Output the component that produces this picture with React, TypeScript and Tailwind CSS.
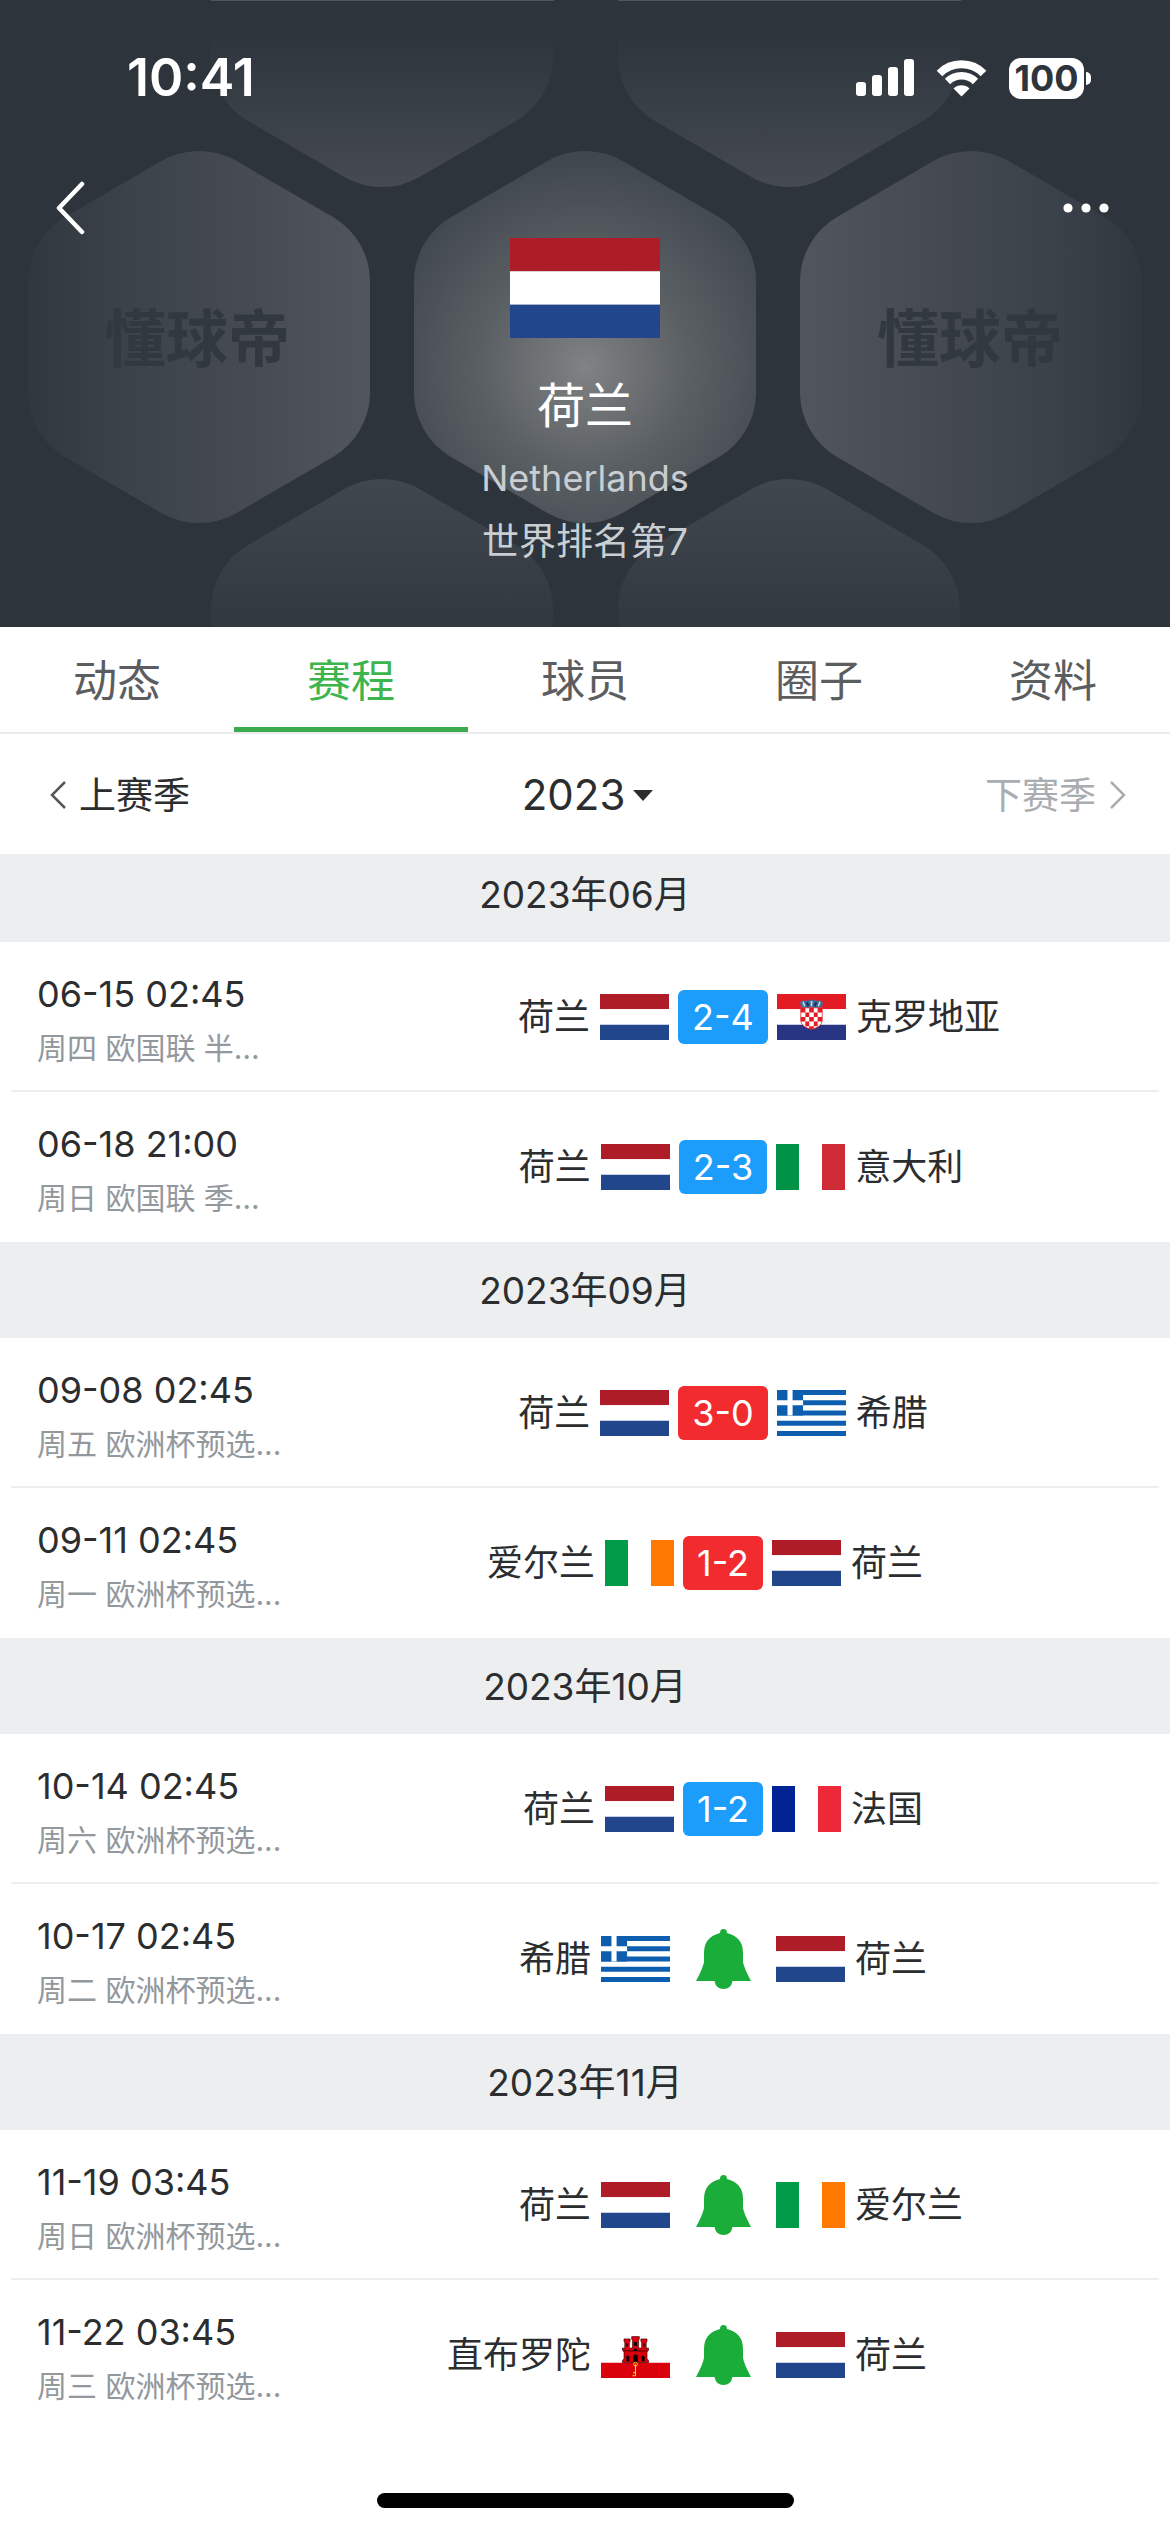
import React from "react";

type FlagCode = "nl" | "hr" | "it" | "gr" | "ie" | "fr" | "gi";

type Team = { name: string; flag: FlagCode };

type Match = {
  time: string;
  info: string;
  home: Team;
  away: Team;
  score?: string;
  result?: "win" | "loss";
};

type Month = { title: string; matches: Match[] };

const NL: Team = { name: "荷兰", flag: "nl" };
const GR: Team = { name: "希腊", flag: "gr" };
const IE: Team = { name: "爱尔兰", flag: "ie" };

const months: Month[] = [
  {
    title: "2023年06月",
    matches: [
      { time: "06-15 02:45", info: "周四 欧国联 半…", home: NL, away: { name: "克罗地亚", flag: "hr" }, score: "2-4", result: "loss" },
      { time: "06-18 21:00", info: "周日 欧国联 季…", home: NL, away: { name: "意大利", flag: "it" }, score: "2-3", result: "loss" },
    ],
  },
  {
    title: "2023年09月",
    matches: [
      { time: "09-08 02:45", info: "周五 欧洲杯预选...", home: NL, away: GR, score: "3-0", result: "win" },
      { time: "09-11 02:45", info: "周一 欧洲杯预选...", home: IE, away: NL, score: "1-2", result: "win" },
    ],
  },
  {
    title: "2023年10月",
    matches: [
      { time: "10-14 02:45", info: "周六 欧洲杯预选...", home: NL, away: { name: "法国", flag: "fr" }, score: "1-2", result: "loss" },
      { time: "10-17 02:45", info: "周二 欧洲杯预选...", home: GR, away: NL },
    ],
  },
  {
    title: "2023年11月",
    matches: [
      { time: "11-19 03:45", info: "周日 欧洲杯预选...", home: NL, away: IE },
      { time: "11-22 03:45", info: "周三 欧洲杯预选...", home: { name: "直布罗陀", flag: "gi" }, away: NL },
    ],
  },
];

const tabs = ["动态", "赛程", "球员", "圈子", "资料"];

const HEX =
  "M-37.5-176A75 75 0 0 1 37.5-176L133.5-120.3A75 75 0 0 1 171-55.7V55.7A75 75 0 0 1 133.5 120.3L37.5 176A75 75 0 0 1-37.5 176L-133.5 120.3A75 75 0 0 1-171 55.7V-55.7A75 75 0 0 1-133.5-120.3Z";

/* Hexagon pattern behind the team header */
const HeaderBackdrop = () => (
  <svg
    className="absolute inset-0 h-full w-full"
    viewBox="0 0 1170 627"
    preserveAspectRatio="xMidYMid slice"
    aria-hidden="true"
  >
    <defs>
      <linearGradient id="hexLeft">
        <stop offset="0" stopColor="#30373f" />
        <stop offset="0.25" stopColor="#3a4148" />
        <stop offset="0.6" stopColor="#444a50" />
        <stop offset="1" stopColor="#51565d" />
      </linearGradient>
      <linearGradient id="hexRight">
        <stop offset="0" stopColor="#51565d" />
        <stop offset="0.4" stopColor="#444a50" />
        <stop offset="0.75" stopColor="#3a4148" />
        <stop offset="1" stopColor="#30373f" />
      </linearGradient>
      <linearGradient id="hexTop" x2="0" y2="1">
        <stop offset="0.58" stopColor="#2d343c" />
        <stop offset="0.75" stopColor="#363d44" />
        <stop offset="1" stopColor="#454b50" />
      </linearGradient>
      <linearGradient id="hexBottom" x2="0" y2="1">
        <stop offset="0" stopColor="#41474e" />
        <stop offset="0.4" stopColor="#31383f" />
      </linearGradient>
      <radialGradient id="hexCenter" gradientUnits="userSpaceOnUse" cx="0" cy="30" r="210">
        <stop offset="0" stopColor="#808284" />
        <stop offset="0.5" stopColor="#5a5f63" />
        <stop offset="1" stopColor="#40474e" />
      </radialGradient>
    </defs>
    <path d={HEX} fill="url(#hexTop)" transform="translate(382 1)" />
    <path d={HEX} fill="url(#hexTop)" transform="translate(789 1)" />
    <path d={HEX} fill="url(#hexBottom)" transform="translate(382 665)" />
    <path d={HEX} fill="url(#hexBottom)" transform="translate(789 665)" />
    <path d={HEX} fill="url(#hexLeft)" transform="translate(199 337)" />
    <path d={HEX} fill="url(#hexCenter)" transform="translate(585 337)" />
    <path d={HEX} fill="url(#hexRight)" transform="translate(971 337)" />
    <path d="M211 0H554V1H211ZM618 0H961V1H618Z" fill="#50565c" />
    <g fill="#31383f" fontSize="62" fontWeight="700" textAnchor="middle">
      <text x="197" y="362">懂球帝</text>
      <text x="970" y="362">懂球帝</text>
    </g>
  </svg>
);

const Flag = ({ code }: { code: FlagCode }) => (
  <svg className="h-full w-full" viewBox="0 0 90 60" preserveAspectRatio="none" aria-hidden="true">
    {code === "nl" && (
      <>
        <path d="M0 0H90V20H0Z" fill="#ae1c28" />
        <path d="M0 20H90V40H0Z" fill="#fff" />
        <path d="M0 40H90V60H0Z" fill="#21468b" />
      </>
    )}
    {code === "hr" && (
      <>
        <path d="M0 0H90V20H0Z" fill="#e31b23" />
        <path d="M0 20H90V40H0Z" fill="#fff" />
        <path d="M0 40H90V60H0Z" fill="#273583" />
        <path d="M30 11L34 8L39 9L45 7L51 9L56 8L60 11L58 19H32Z" fill="#3d6f9c" />
        <path d="M34 10L36 16M45 9V16M56 10L54 16" stroke="#c9dbe6" strokeWidth="2" />
        <path d="M39 11L41 16M51 11L49 16" stroke="#1c2f5e" strokeWidth="3" />
        <path d="M31 18H59V34Q59 43 45 46Q31 43 31 34Z" fill="#fff" />
        <path
          d="M31 18H37V24H31ZM42 18H48V24H42ZM53 18H59V24H53ZM37 24H42V30H37ZM48 24H53V30H48ZM31 30H37V36H31ZM42 30H48V36H42ZM53 30H59V36H53ZM37 36H42V42H37ZM48 36H53V42H48ZM42 42H48V45L45 46L42 45Z"
          fill="#e31b23"
        />
        <path d="M31 18H59V34Q59 43 45 46Q31 43 31 34Z" fill="none" stroke="#e31b23" />
      </>
    )}
    {code === "it" && (
      <>
        <path d="M0 0H30V60H0Z" fill="#009246" />
        <path d="M30 0H60V60H30Z" fill="#fff" />
        <path d="M60 0H90V60H60Z" fill="#ce2b37" />
      </>
    )}
    {code === "gr" && (
      <>
        <path d="M0 0H90V60H0Z" fill="#0d5eaf" />
        <path d="M0 10H90M0 23.3H90M0 36.7H90M0 50H90" stroke="#fff" strokeWidth="6.7" />
        <path d="M0 0H34V33.3H0Z" fill="#0d5eaf" />
        <path d="M17 0V33.3M0 16.7H34" stroke="#fff" strokeWidth="6.7" />
      </>
    )}
    {code === "ie" && (
      <>
        <path d="M0 0H30V60H0Z" fill="#009a49" />
        <path d="M30 0H60V60H30Z" fill="#fff" />
        <path d="M60 0H90V60H60Z" fill="#ff7900" />
      </>
    )}
    {code === "fr" && (
      <>
        <path d="M0 0H30V60H0Z" fill="#002395" />
        <path d="M30 0H60V60H30Z" fill="#fff" />
        <path d="M60 0H90V60H60Z" fill="#ed2939" />
      </>
    )}
    {code === "gi" && (
      <>
        <path d="M0 0H90V40H0Z" fill="#fff" />
        <path d="M0 40H90V60H0Z" fill="#da000c" />
        <path
          d="M30 9H38V12L37 14V21H41V11L40 9V6H50V9L49 11V21H53V14L52 12V9H60V12L59 14V21H62V24L60 26V35L62 37V40H28V37L30 35V26L28 24V21H31V14L30 12Z"
          fill="#da000c"
          stroke="#2a0000"
          strokeWidth="0.8"
        />
        <path
          d="M42 31Q45 27 48 31V39H42ZM33 32Q35 29 37 32V38H33ZM53 32Q55 29 57 32V38H53ZM43 13H47V18H43ZM33 15H35V19H33ZM55 15H57V19H55ZM30 24H60V25H30ZM43 22H47V25H43Z"
          fill="#120000"
        />
        <path d="M45 42V57M41 57H45M42 53H45" stroke="#f8d80e" strokeWidth="1.4" fill="none" />
        <circle cx="45" cy="42" r="2.5" stroke="#f8d80e" strokeWidth="1.2" fill="none" />
      </>
    )}
  </svg>
);

const Bell = () => (
  <svg className="h-[60px] w-[55px]" viewBox="0 0 55 60" fill="#1aad39" aria-hidden="true">
    <path d="M24 4Q24 0 27.5 0Q31 0 31 4Q47 8 47 24V33Q48 39 55 52H36.5Q35 60 27.5 60Q20 60 18.5 52H0Q7 39 8 33V24Q8 8 24 4Z" />
  </svg>
);

const StatusBar = () => (
  <div className="flex h-[156px] items-center justify-between pl-[127px] pr-[79px]">
    <span className="text-[52px] leading-none font-semibold text-white">10:41</span>
    <div className="flex items-center gap-[22px]">
      <svg className="h-[38px] w-[58px]" viewBox="0 0 58 38" fill="#fff" aria-hidden="true">
        <rect x="0" y="23" width="10" height="14" rx="3" />
        <rect x="16" y="16" width="10" height="21" rx="3" />
        <rect x="32" y="8" width="10" height="29" rx="3" />
        <rect x="48" y="0" width="10" height="37" rx="3" />
      </svg>
      <svg className="h-[38px] w-[51px]" viewBox="0 0 51 38" fill="none" aria-hidden="true">
        <path d="M3.500 14.500A31 31 0 0 1 47.500 14.500" stroke="#fff" strokeWidth="8" />
        <path d="M11.500 22.500A20 20 0 0 1 39.500 22.500" stroke="#fff" strokeWidth="7.500" />
        <path d="M17.500 29.500A11.500 11.500 0 0 1 33.500 29.500L25.500 37.500Z" fill="#fff" />
      </svg>
      <div className="flex items-center gap-[2px]">
        <span className="flex h-[41px] w-[75px] items-center justify-center rounded-[12px] bg-white text-[36px] leading-none font-bold text-[#2d343c]">
          100
        </span>
        <span className="h-[13px] w-[5px] rounded-r-full bg-white" />
      </div>
    </div>
  </div>
);

const TeamHeader = () => (
  <header className="relative h-[627px] overflow-hidden bg-[#2d343c]">
    <HeaderBackdrop />
    <div className="relative">
      <StatusBar />
      <div className="flex h-[82px] items-start justify-between px-[55px] pt-[24px]">
        <button type="button" aria-label="返回">
          <svg className="h-[56px] w-[30px]" viewBox="0 0 30 56" fill="none" aria-hidden="true">
            <path d="M27 4L4 28L27 52" stroke="#fff" strokeWidth="4.500" strokeLinecap="round" strokeLinejoin="round" />
          </svg>
        </button>
        <button type="button" aria-label="更多">
          <svg className="h-[56px] w-[54px]" viewBox="0 0 54 56" fill="#fff" aria-hidden="true">
            <circle cx="7" cy="28" r="4.600" />
            <circle cx="25" cy="28" r="4.600" />
            <circle cx="43" cy="28" r="4.600" />
          </svg>
        </button>
      </div>
      <div className="flex flex-col items-center">
        <div className="h-[100px] w-[150px]">
          <Flag code="nl" />
        </div>
        <h1 className="mt-[36px] text-[48px] leading-[64px] text-white">荷兰</h1>
        <p className="mt-[18px] text-[36px] leading-[44px] text-[#c9ced3]">Netherlands</p>
        <p className="mt-[20px] text-[37px] leading-[44px] text-[#c9ced3]">世界排名第7</p>
      </div>
    </div>
  </header>
);

const Tabs = () => (
  <nav className="grid h-[107px] grid-cols-5 border-b-2 border-[#ebecee] text-[44px] leading-none text-[#5b5d5f]">
    {tabs.map((tab) =>
      tab === "赛程" ? (
        <button
          key={tab}
          type="button"
          aria-current="page"
          className="border-t-[5px] border-b-[5px] border-t-transparent border-b-[#3cab50] pt-[2px] text-[#3cb54c]"
        >
          {tab}
        </button>
      ) : (
        <button key={tab} type="button" className="pt-[2px]">
          {tab}
        </button>
      )
    )}
  </nav>
);

const SeasonBar = () => (
  <div className="relative z-10 grid h-[120px] grid-cols-3 items-center bg-white pt-[2px] pr-[43px] pl-[48px] text-[37px] leading-none">
    <button type="button" className="flex items-center gap-[13px] text-[#2b2d2f]">
      <svg className="h-[28px] w-[18px]" viewBox="0 0 18 28" fill="none" aria-hidden="true">
        <path d="M17 1L4 14L17 27" stroke="#55585b" strokeWidth="2.500" />
      </svg>
      上赛季
    </button>
    <button type="button" className="flex items-center justify-center gap-[8px] text-[42px] text-[#2b2d2f]">
      2023
      <svg className="h-[11px] w-[20px]" viewBox="0 0 20 11" fill="#2b2d2f" aria-hidden="true">
        <path d="M0 0H20L10 11Z" />
      </svg>
    </button>
    <button type="button" className="flex items-center justify-end gap-[13px] text-[#a9adb0]">
      下赛季
      <svg className="h-[28px] w-[18px]" viewBox="0 0 18 28" fill="none" aria-hidden="true">
        <path d="M2 1L15 14L2 27" stroke="#a9adb0" strokeWidth="2.500" />
      </svg>
    </button>
  </div>
);

const MatchRow = ({ match }: { match: Match }) => (
  <li className="mx-[11px] flex h-[150px] items-center border-b-2 border-[#ededee] pt-[2px] last:border-transparent">
    <div className="w-[276px] shrink-0 pt-[8px] pl-[26px] whitespace-nowrap">
      <p className="text-[36px] leading-[54px] text-[#2b2d2f]">{match.time}</p>
      <p className="text-[30px] leading-[54px] text-[#93989d]">{match.info}</p>
    </div>
    <div className="grid grow grid-cols-[1fr_auto_1fr] items-center gap-[9px] text-[36px] leading-none text-[#2b2d2f]">
      <div className="flex items-center justify-end gap-[10px]">
        {match.home.name}
        <span className="h-[46px] w-[69px]">
          <Flag code={match.home.flag} />
        </span>
      </div>
      {match.score ? (
        <a
          href="#"
          className={`flex h-[54px] items-center rounded-[6px] px-[14px] text-white ${
            match.result === "win" ? "bg-[#f22b2e]" : "bg-[#1d9dfb]"
          }`}
        >
          {match.score}
        </a>
      ) : (
        <button type="button" aria-label="比赛提醒" className="flex w-[88px] justify-center">
          <Bell />
        </button>
      )}
      <div className="flex items-center gap-[10px]">
        <span className="h-[46px] w-[69px]">
          <Flag code={match.away.flag} />
        </span>
        {match.away.name}
      </div>
    </div>
  </li>
);

const App = () => {
  return (
    <div className="flex min-h-screen flex-col bg-white font-['Inter','Noto_Sans_CJK_SC',sans-serif]">
      <TeamHeader />
      <Tabs />
      <SeasonBar />

      {/* The first month title is partly scrolled under the season bar */}
      <main className="-mt-[8px] grow">
        {months.map((month) => (
          <section key={month.title}>
            <h2 className="flex h-[96px] items-center justify-center bg-[#edeef0] text-[37px] leading-none text-[#2b2d2f]">
              {month.title}
            </h2>
            <ul>
              {month.matches.map((match) => (
                <MatchRow key={match.time} match={match} />
              ))}
            </ul>
          </section>
        ))}
      </main>

      {/* Home indicator */}
      <div className="flex justify-center pb-[24px]">
        <div className="h-[15px] w-[417px] rounded-full bg-black" />
      </div>
    </div>
  );
};

export default App;
